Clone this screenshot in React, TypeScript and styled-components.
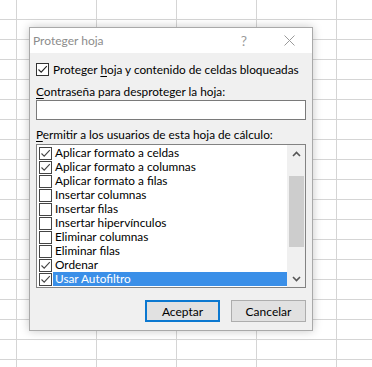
import React, { useState } from "react";
import styled, { createGlobalStyle } from "styled-components";

const GlobalStyle = createGlobalStyle`
  html, body {
    margin: 0;
    padding: 0;
  }
  body {
    font-family: "Segoe UI", Lato, "Liberation Sans", sans-serif;
    font-size: 11.8px;
    color: #000;
  }
`;

const Sheet = styled.div`
  min-height: 100vh;
  box-sizing: border-box;
  padding: 27px 0 0 29px;
  background-color: #fff;
  background-image: linear-gradient(to right, #d5d5d5 1px, transparent 1px),
    linear-gradient(to bottom, #d5d5d5 1px, transparent 1px);
  background-size: 80px 20px;
  background-position: 16px 19px;
`;

const Dialog = styled.div`
  width: 284px;
  box-sizing: border-box;
  border: 1px solid #a9a9a9;
  background: #f0f0f0;
  box-shadow: 0 0 9px rgba(0, 0, 0, 0.22);
`;

const TitleBar = styled.div`
  height: 25px;
  background: #fff;
  display: flex;
  align-items: center;
  padding-right: 8px;
`;

const Title = styled.div`
  flex: 1;
  padding-left: 3px;
  font-size: 12px;
  color: #8c8c8c;
`;

const TitleButton = styled.div<{ $gap?: number }>`
  width: 30px;
  height: 25px;
  display: flex;
  align-items: center;
  justify-content: center;
  margin-left: ${(p) => p.$gap || 0}px;
  color: #9a9a9a;
  font-size: 14px;
`;

const Body = styled.div`
  padding: 8px 5px 8px 6px;
`;

const CheckRow = styled.label`
  display: flex;
  align-items: center;
  height: 16px;
  gap: 4px;
  white-space: nowrap;
`;

const Box = styled.span<{ $light?: boolean }>`
  width: 13px;
  height: 13px;
  box-sizing: border-box;
  border: 1px solid ${(p) => (p.$light ? "#444" : "#333")};
  background: #fff;
  display: flex;
  align-items: center;
  justify-content: center;
  flex: none;
`;

const FieldLabel = styled.div<{ $top: number }>`
  margin-top: ${(p) => p.$top}px;
  line-height: 16px;
  white-space: nowrap;
`;

const Mnemonic = styled.u`
  text-decoration-thickness: 1px;
  text-underline-offset: 2px;
`;

const PasswordInput = styled.input`
  display: block;
  width: 270px;
  height: 20px;
  box-sizing: border-box;
  margin: 0;
  border: 1px solid #7a7a7a;
  background: #fff;
  outline: none;
`;

const ListBox = styled.div`
  margin-top: 1px;
  width: 270px;
  height: 144px;
  box-sizing: border-box;
  border: 1px solid #828282;
  background: #fff;
  display: flex;
  padding: 1px 0 1px 0;
`;

const Items = styled.div`
  flex: 1;
  display: flex;
  flex-direction: column;
`;

const Item = styled.div`
  height: 14px;
  display: flex;
  align-items: center;
  padding-left: 2px;
`;

const ItemText = styled.span<{ $selected?: boolean }>`
  flex: 1;
  height: 14px;
  line-height: 14px;
  padding-left: 2px;
  margin-left: 1px;
  background: ${(p) => (p.$selected ? "#3a8fe8" : "transparent")};
  color: ${(p) => (p.$selected ? "#fff" : "#000")};
  white-space: nowrap;
`;

const ScrollBar = styled.div`
  width: 18px;
  margin-top: -1px;
  margin-bottom: -1px;
  background: #f0f0f0;
  display: flex;
  flex-direction: column;
  align-items: center;
`;

const Arrow = styled.div`
  height: 17px;
  width: 18px;
  display: flex;
  align-items: center;
  justify-content: center;
`;

const Track = styled.div`
  flex: 1;
  width: 15px;
  padding-top: 14px;
`;

const Thumb = styled.div`
  height: 71px;
  background: #cdcdcd;
`;

const Buttons = styled.div`
  margin-top: 12px;
  display: flex;
  justify-content: flex-end;
  gap: 11px;
  padding-right: 1px;
`;

const Button = styled.button<{ $primary?: boolean }>`
  width: 75px;
  height: 22px;
  margin: 0;
  padding: 0;
  box-sizing: border-box;
  font-family: inherit;
  font-size: 12px;
  color: #000;
  background: #e1e1e1;
  border: ${(p) => (p.$primary ? "2px solid #0b78d0" : "1px solid #adadad")};
`;

const Check = ({ color = "#222" }: { color?: string }) => (
  <svg width="11" height="11" viewBox="0 0 11 11">
    <path d="M1.5 5.5 L4.2 8.2 L9.8 2.2" fill="none" stroke={color} strokeWidth="1.1" />
  </svg>
);

const Chevron = ({ up }: { up?: boolean }) => (
  <svg width="9" height="6" viewBox="0 0 9 6">
    <path
      d={up ? "M1 5 L4.5 1.5 L8 5" : "M1 1 L4.5 4.5 L8 1"}
      fill="none"
      stroke="#555"
      strokeWidth="1.6"
    />
  </svg>
);

const permissions = [
  { label: "Aplicar formato a celdas", checked: true },
  { label: "Aplicar formato a columnas", checked: true },
  { label: "Aplicar formato a filas", checked: false },
  { label: "Insertar columnas", checked: false },
  { label: "Insertar filas", checked: false },
  { label: "Insertar hipervínculos", checked: false },
  { label: "Eliminar columnas", checked: false },
  { label: "Eliminar filas", checked: false },
  { label: "Ordenar", checked: true },
  { label: "Usar Autofiltro", checked: true },
];

export default function App() {
  const [selected] = useState(9);
  return (
    <Sheet>
      <GlobalStyle />
      <Dialog>
        <TitleBar>
          <Title>Proteger hoja</Title>
          <TitleButton>?</TitleButton>
          <TitleButton $gap={15}>
            <svg width="11" height="11" viewBox="0 0 11 11">
              <path d="M0.5 0.5 L10.5 10.5 M10.5 0.5 L0.5 10.5" stroke="#9a9a9a" strokeWidth="1" />
            </svg>
          </TitleButton>
        </TitleBar>
        <Body>
          <CheckRow>
            <Box>
              <Check />
            </Box>
            <span>
              Proteger <Mnemonic>h</Mnemonic>oja y contenido de celdas bloqueadas
            </span>
          </CheckRow>
          <FieldLabel $top={7}>
            <Mnemonic>C</Mnemonic>ontraseña para desproteger la hoja:
          </FieldLabel>
          <PasswordInput type="password" />
          <FieldLabel $top={7}>
            <Mnemonic>P</Mnemonic>ermitir a los usuarios de esta hoja de cálculo:
          </FieldLabel>
          <ListBox>
            <Items>
              {permissions.map((p, i) => (
                <Item key={p.label}>
                  <Box $light>{p.checked && <Check color="#444" />}</Box>
                  <ItemText $selected={i === selected}>{p.label}</ItemText>
                </Item>
              ))}
            </Items>
            <ScrollBar>
              <Arrow>
                <Chevron up />
              </Arrow>
              <Track>
                <Thumb />
              </Track>
              <Arrow>
                <Chevron />
              </Arrow>
            </ScrollBar>
          </ListBox>
          <Buttons>
            <Button $primary>Aceptar</Button>
            <Button>Cancelar</Button>
          </Buttons>
        </Body>
      </Dialog>
    </Sheet>
  );
}
